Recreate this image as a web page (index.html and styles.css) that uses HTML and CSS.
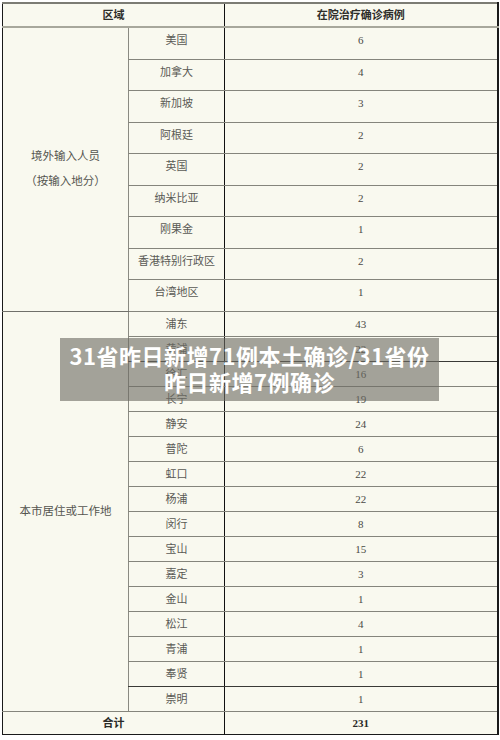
FILE: index.html
```html
<!DOCTYPE html>
<html lang="zh-CN">
<head>
<meta charset="utf-8">
<title>31省昨日新增71例本土确诊</title>
<link rel="stylesheet" href="styles.css">
</head>
<body>
<div class="wrap">
<table class="data">
  <colgroup>
    <col class="c1"><col class="c2"><col class="c3">
  </colgroup>
  <thead>
    <tr class="head"><th colspan="2">区域</th><th class="num">在院治疗确诊病例</th></tr>
  </thead>
  <tbody class="g1">
    <tr><td class="grp" rowspan="9">境外输入人员<br>（按输入地分）</td><td class="area">美国</td><td class="num">6</td></tr>
    <tr><td class="area">加拿大</td><td class="num">4</td></tr>
    <tr><td class="area">新加坡</td><td class="num">3</td></tr>
    <tr><td class="area">阿根廷</td><td class="num">2</td></tr>
    <tr><td class="area">英国</td><td class="num">2</td></tr>
    <tr><td class="area">纳米比亚</td><td class="num">2</td></tr>
    <tr><td class="area">刚果金</td><td class="num">1</td></tr>
    <tr><td class="area">香港特别行政区</td><td class="num">2</td></tr>
    <tr><td class="area">台湾地区</td><td class="num">1</td></tr>
  </tbody>
  <tbody class="g2">
    <tr><td class="grp" rowspan="16">本市居住或工作地</td><td class="area">浦东</td><td class="num">43</td></tr>
    <tr class="dark"><td class="area">黄浦</td><td class="num">22</td></tr>
    <tr><td class="area">徐汇</td><td class="num">16</td></tr>
    <tr><td class="area">长宁</td><td class="num">19</td></tr>
    <tr><td class="area">静安</td><td class="num">24</td></tr>
    <tr><td class="area">普陀</td><td class="num">6</td></tr>
    <tr><td class="area">虹口</td><td class="num">22</td></tr>
    <tr><td class="area">杨浦</td><td class="num">22</td></tr>
    <tr><td class="area">闵行</td><td class="num">8</td></tr>
    <tr><td class="area">宝山</td><td class="num">15</td></tr>
    <tr><td class="area">嘉定</td><td class="num">3</td></tr>
    <tr><td class="area">金山</td><td class="num">1</td></tr>
    <tr><td class="area">松江</td><td class="num">4</td></tr>
    <tr><td class="area">青浦</td><td class="num">1</td></tr>
    <tr class="dark"><td class="area">奉贤</td><td class="num">1</td></tr>
    <tr><td class="area">崇明</td><td class="num">1</td></tr>
  </tbody>
  <tfoot>
    <tr class="total"><td colspan="2">合计</td><td class="num">231</td></tr>
  </tfoot>
</table>
<div class="caption">
  <p>31省昨日新增71例本土确诊/31省份</p>
  <p>昨日新增7例确诊</p>
</div>
</div>
</body>
</html>
```

FILE: styles.css
```css
html, body {
  margin: 0;
  padding: 0;
  background: #ffffff;
}

.wrap {
  position: relative;
  padding: 2px 3px 0 2px;
}

.data {
  width: 495px;
  border-collapse: collapse;
  table-layout: fixed;
  background: #f9f9ef;
  font-family: "Liberation Serif", "Noto Sans CJK SC", serif;
  font-size: 11px;
  line-height: 14px;
  color: #5a5a55;
  border-top: 2px solid #7c7c74;
  border-left: 1px solid #1a1a1a;
  border-right: 2px solid #1a1a1a;
  border-bottom: 1px solid #1a1a1a;
}

.c1 { width: 126px; }
.c2 { width: 96px; }
.c3 { width: 273px; }

.data th,
.data td {
  padding: 0;
  text-align: center;
  vertical-align: middle;
  border-bottom: 1px solid #85857c;
}

.data .area {
  border-left: 1px solid #8a8a82;
  border-right: 1px solid #111111;
}

.head th {
  height: 21px;
  padding-bottom: 1px;
  font-weight: bold;
  color: #2e2e2a;
  font-size: 11px;
  border-bottom: 2px solid #a8a89c;
}

.head th:first-child {
  border-right: 1px solid #111111;
}

.g1 td {
  height: 24.5px;
  padding-bottom: 6px;
}

.g2 td {
  height: 24px;
}

.g1 .grp,
.g2 .grp {
  height: auto;
  padding-bottom: 0;
  line-height: 25px;
  font-size: 11.5px;
  color: #55554f;
}

.g1 .grp {
  border-bottom: 1px solid #70706a;
}

.dark td {
  border-bottom-color: #3a3a36;
}

.num {
  color: #4a4a46;
}

.total td {
  height: 22px;
  font-weight: bold;
  color: #2a2a27;
  border-bottom: none;
}

.total td:first-child {
  border-right: 1px solid #111111;
}

.caption {
  position: absolute;
  left: 60px;
  top: 338px;
  width: 379px;
  height: 63px;
  box-sizing: border-box;
  padding-top: 4px;
  background: rgba(110, 108, 100, 0.62);
  color: #ffffff;
  font-family: "Noto Sans CJK SC", "Noto Sans", sans-serif;
  font-weight: bold;
  font-size: 22px;
  line-height: 26px;
  text-align: center;
  letter-spacing: 0.5px;
}

.caption p {
  margin: 0;
}
```
